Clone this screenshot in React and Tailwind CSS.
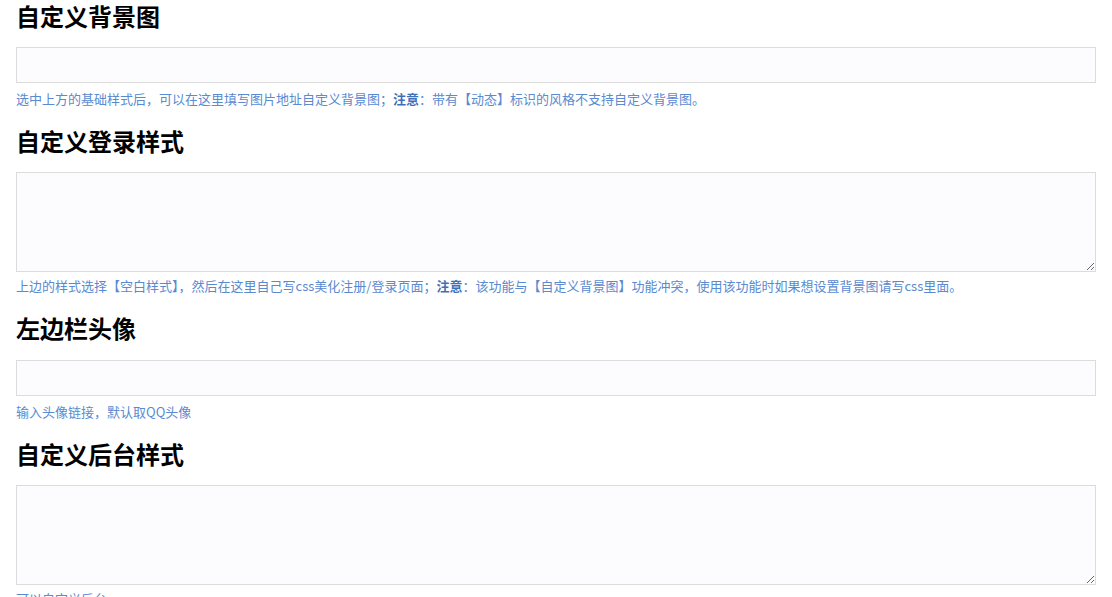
import React from 'react';

const Note = () => <strong className="font-bold leading-none text-[#3f6fb8]">注意</strong>;

const SECTIONS = [
  {
    title: '自定义背景图',
    multiline: false,
    gap: 'mt-[15px]',
    help: (
      <>
        选中上方的基础样式后，可以在这里填写图片地址自定义背景图；<Note />：带有【动态】标识的风格不支持自定义背景图。
      </>
    ),
  },
  {
    title: '自定义登录样式',
    multiline: true,
    gap: 'mt-[15px]',
    help: (
      <>
        上边的样式选择【空白样式】，然后在这里自己写css美化注册/登录页面；<Note />：该功能与【自定义背景图】功能冲突，使用该功能时如果想设置背景图请写css里面。
      </>
    ),
  },
  { title: '左边栏头像', multiline: false, gap: 'mt-4', help: '输入头像链接，默认取QQ头像' },
  { title: '自定义后台样式', multiline: true, gap: 'mt-[15px]', help: '可以自定义后台' },
];

export default function App() {
  return (
    <div className="h-[597px] overflow-hidden bg-white px-4 font-['Noto_Sans_CJK_SC',sans-serif]">
      {SECTIONS.map((s) => (
        <div key={s.title} className="mb-[18px]">
          <h2 className="text-[24px] font-bold leading-[32px] text-black">{s.title}</h2>
          {s.multiline ? (
            <>
              <textarea
                className={`${s.gap} block h-[100px] w-full resize-y border border-[#dcdcdc] bg-[#fcfcfe] outline-none`}
              />
              <p className="mt-1.5 h-4 text-[13px] leading-4 text-[#5a8ad0]">{s.help}</p>
            </>
          ) : (
            <>
              <input
                type="text"
                className={`${s.gap} block h-9 w-full border border-[#dcdcdc] bg-[#fcfcfe] outline-none`}
              />
              <p className="mt-2 h-4 text-[13px] leading-4 text-[#5a8ad0]">{s.help}</p>
            </>
          )}
        </div>
      ))}
    </div>
  );
}
